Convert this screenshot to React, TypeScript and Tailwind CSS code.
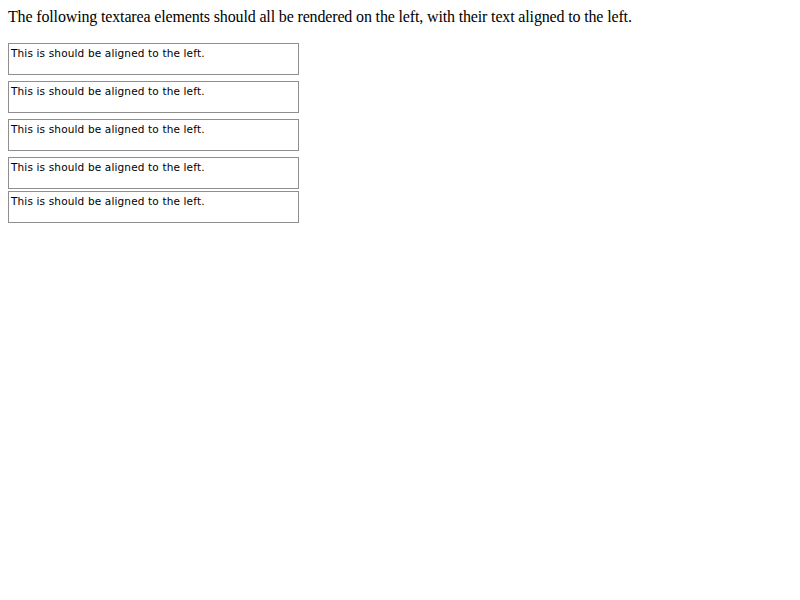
import React from 'react';

const lines = [0, 1, 2, 3, 4];

export default function App() {
  return (
    <div className="p-2 bg-white min-h-[600px] text-black">
      <div className="text-[16px] leading-[18px] tracking-[-0.15px] font-['Liberation_Serif',serif]">
        The following textarea elements should all be rendered on the left, with their text aligned to the left.
      </div>
      <div className="mt-[17px] flex flex-col">
        {lines.map((i) => (
          <textarea
            key={i}
            readOnly
            defaultValue="This is should be aligned to the left."
            className={`block w-[291px] h-[32px] resize-none overflow-hidden border border-[#8f8f8f] px-[2px] pt-[2px] text-left text-[10.5px] leading-[14px] tracking-[0.15px] font-['DejaVu_Sans',sans-serif] outline-none ${
              i === 3 ? 'mb-[2px]' : 'mb-[6px]'
            }`}
          />
        ))}
      </div>
    </div>
  );
}
